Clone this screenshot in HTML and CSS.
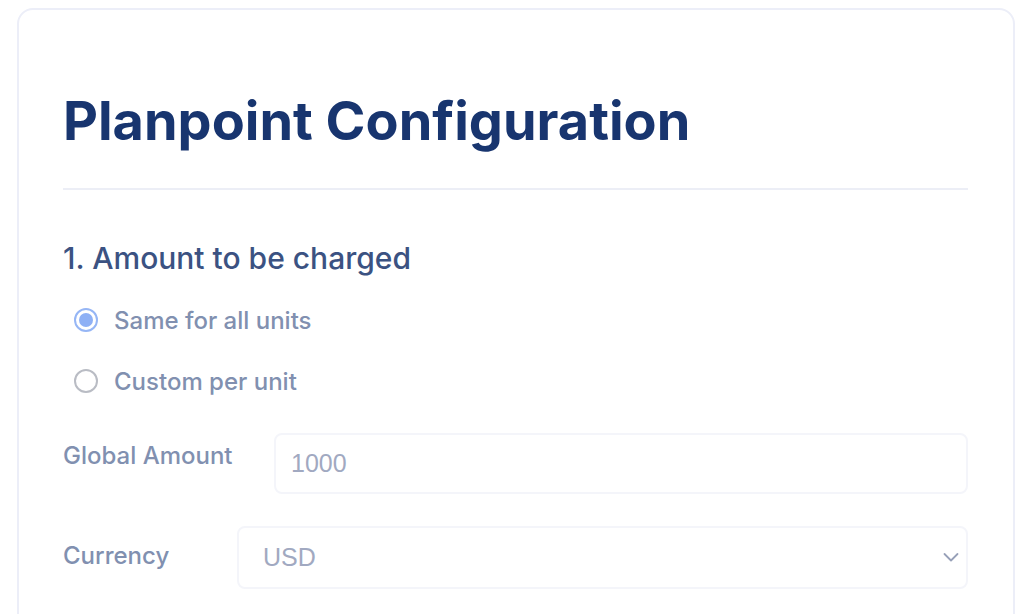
FILE: index.html
```html
<!DOCTYPE html>
<html lang="en">
<head>
<meta charset="utf-8">
<title>Planpoint Configuration</title>
<link rel="stylesheet" href="styles.css">
</head>
<body>
<main class="card">
  <h1 class="title">Planpoint Configuration</h1>
  <hr class="divider">
  <section class="section">
    <h2 class="section-title">1. Amount to be charged</h2>
    <div class="radio-group">
      <label class="radio-row">
        <span class="radio radio-checked"><span class="radio-dot"></span></span>
        <span class="radio-label">Same for all units</span>
      </label>
      <label class="radio-row">
        <span class="radio"></span>
        <span class="radio-label">Custom per unit</span>
      </label>
    </div>
    <div class="field field-amount">
      <span class="field-label">Global Amount</span>
      <div class="control control-amount"><span class="control-text">1000</span></div>
    </div>
    <div class="field field-currency">
      <span class="field-label">Currency</span>
      <div class="control control-select">
        <span class="control-text">USD</span>
        <svg class="chevron" width="16" height="11" viewBox="0 0 16 11"><path d="M1.5 2 L8 8.5 L14.5 2" fill="none" stroke="#97a0b8" stroke-width="1.8" stroke-linecap="round" stroke-linejoin="round"/></svg>
      </div>
    </div>
  </section>
</main>
</body>
</html>
```

FILE: styles.css
```css
html, body {
  margin: 0;
  background: #ffffff;
}
body {
  padding: 8px 15px 0 17px;
  font-family: Inter, "Noto Sans", sans-serif;
  overflow: hidden;
  height: 614px;
  box-sizing: border-box;
}
.card {
  border: 2px solid #eceef8;
  border-radius: 16px;
  padding: 79px 45px 60px 44px;
  min-height: 700px;
  box-sizing: border-box;
}
.title {
  margin: 0;
  font-size: 54px;
  line-height: 64px;
  font-weight: 700;
  color: #18356f;
}
.divider {
  border: 0;
  height: 2px;
  background: #eceef6;
  margin: 35px 0 0 0;
}
.section-title {
  margin: 50px 0 0 0;
  font-size: 30px;
  line-height: 36px;
  font-weight: 500;
  color: #3b5282;
}
.radio-group {
  margin-top: 26px;
  display: flex;
  flex-direction: column;
  gap: 25px;
  padding-left: 11px;
}
.radio-row {
  display: flex;
  align-items: center;
  gap: 16px;
  height: 36px;
}
.radio {
  width: 24px;
  height: 24px;
  border-radius: 50%;
  border: 2px solid #b9bcc4;
  box-sizing: border-box;
  display: flex;
  align-items: center;
  justify-content: center;
  background: #fff;
}
.radio-checked {
  border-color: #96b6f5;
}
.radio-dot {
  width: 14px;
  height: 14px;
  border-radius: 50%;
  background: #8eb0f5;
}
.radio-label {
  font-size: 24px;
  font-weight: 500;
  color: #8190b0;
}
.field {
  display: flex;
  align-items: flex-start;
}
.field-amount {
  margin-top: 34px;
}
.field-currency {
  margin-top: 32px;
}
.field-label {
  font-size: 24px;
  font-weight: 500;
  color: #8190b0;
  line-height: 30px;
}
.field-amount .field-label {
  width: 211px;
  padding-top: 8px;
}
.field-currency .field-label {
  width: 174px;
  padding-top: 15px;
}
.control {
  flex: 1;
  border: 2px solid #f4f5fa;
  border-radius: 8px;
  height: 61px;
  box-sizing: border-box;
  display: flex;
  align-items: center;
  padding-left: 15px;
  padding-right: 7px;
}
.control-select {
  height: 63px;
  padding-left: 24px;
}
.control-text {
  font-family: "Liberation Sans", Arial, sans-serif;
  font-size: 25px;
  color: #a1a9c1;
  flex: 1;
}
.chevron {
  display: block;
}
```
